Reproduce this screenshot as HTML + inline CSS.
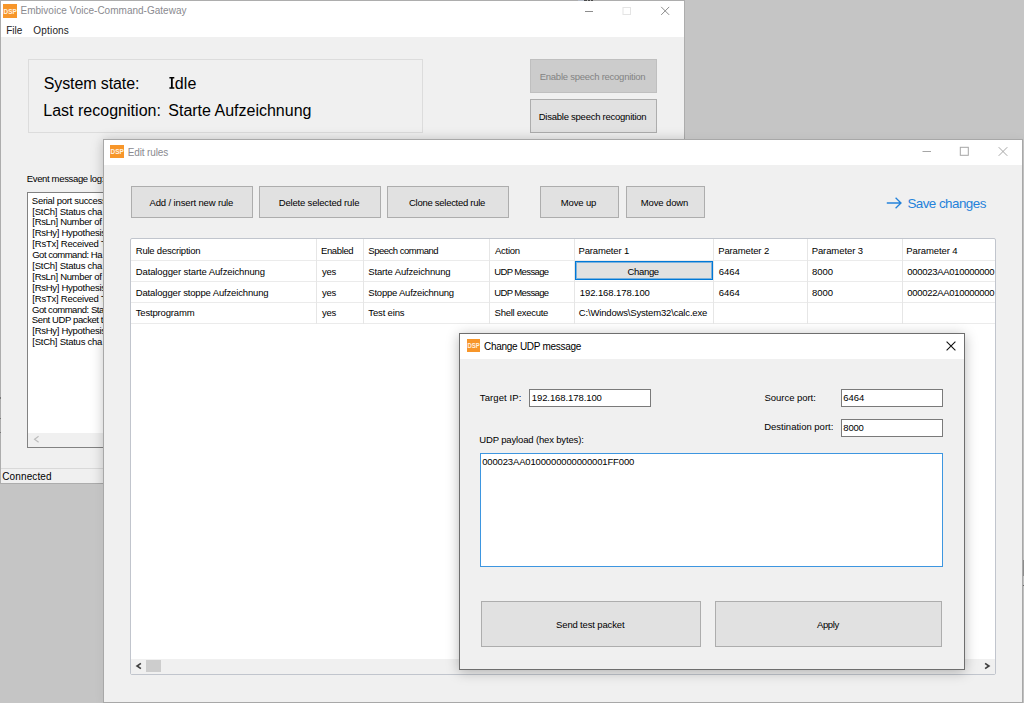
<!DOCTYPE html>
<html><head><meta charset="utf-8"><title>Embivoice Voice-Command-Gateway</title>
<style>
html,body{margin:0;padding:0;}
body{width:1024px;height:703px;overflow:hidden;position:relative;background:#c5c5c5;font-family:"Liberation Sans",sans-serif;}
.b{position:absolute;box-sizing:border-box;}
.t{position:absolute;white-space:nowrap;font-family:"Liberation Sans",sans-serif;}
</style></head><body>
<div class="b" style="left:0px;top:0px;width:685px;height:484px;background:#f0f0f0;border:1px solid #adadad;"></div>
<div class="b" style="left:1px;top:1px;width:683px;height:36px;background:#fff;"></div>
<svg class="b" style="left:3px;top:4px" width="14" height="14" viewBox="0 0 14 14" preserveAspectRatio="none"><rect width="14" height="14" fill="#f7962a"/><text x="7.2" y="9.7" font-family="Liberation Sans" font-weight="bold" font-size="7.4" text-anchor="middle" fill="#fff1e0" textLength="13.2" lengthAdjust="spacingAndGlyphs">DSP</text></svg>
<div class="t" style="left:20.50px;top:4px;font-size:10px;line-height:13px;color:#8a8a8f;letter-spacing:0.012px;">Embivoice Voice-Command-Gateway</div>
<div class="t" style="left:6.20px;top:24px;font-size:10px;line-height:13px;color:#222;letter-spacing:0.033px;">File</div>
<div class="t" style="left:33.35px;top:24px;font-size:10px;line-height:13px;color:#222;letter-spacing:0.175px;">Options</div>
<svg class="b" style="left:580px;top:3px" width="100" height="16" viewBox="0 0 100 16"><path d="M5 8.5h8" stroke="#8c8c8c" stroke-width="1" fill="none"/><rect x="43" y="4.5" width="7.5" height="7" stroke="#e4e4e4" stroke-width="1" fill="none"/><path d="M81.2 3.9l8 8M89.2 3.9l-8 8" stroke="#8c8c8c" stroke-width="1" fill="none"/></svg>
<div class="b" style="left:578px;top:0px;width:6px;height:1px;background:#b6bdc9;"></div>
<div class="b" style="left:584px;top:0px;width:3px;height:1px;background:#4a4a4a;"></div>
<div class="b" style="left:588px;top:0px;width:2px;height:1px;background:#4a4a4a;"></div>
<div class="b" style="left:591px;top:0px;width:2px;height:1px;background:#4a4a4a;"></div>
<div class="b" style="left:0px;top:397px;width:1px;height:2px;background:#777;"></div>
<div class="b" style="left:0px;top:418px;width:1px;height:1px;background:#777;"></div>
<div class="b" style="left:0px;top:432px;width:1px;height:1px;background:#777;"></div>
<div class="b" style="left:28px;top:59px;width:395px;height:74px;border:1px solid #dcdcdc;"></div>
<div class="t" style="left:43.78px;top:74px;font-size:16px;line-height:20px;color:#000;letter-spacing:-0.108px;">System state:</div>
<svg class="b" style="left:169px;top:76px" width="6" height="14" viewBox="0 0 6 14"><path d="M0.4 1.1h4.9v1.5h-1.55v8.7h1.55v1.5h-4.9v-1.5h1.55v-8.7h-1.55z" fill="#000"/></svg>
<div class="t" style="left:174.86px;top:74px;font-size:16px;line-height:20px;color:#000;letter-spacing:0.06px;">dle</div>
<div class="t" style="left:43.22px;top:101px;font-size:16px;line-height:20px;color:#000;letter-spacing:0.018px;">Last recognition:</div>
<div class="t" style="left:168.28px;top:101px;font-size:16px;line-height:20px;color:#000;letter-spacing:-0.001px;">Starte Aufzeichnung</div>
<div class="b" style="left:530px;top:59px;width:127px;height:34px;background:#cccccc;border:1px solid #bfbfbf;"></div>
<div class="t" style="left:539.74px;top:71px;font-size:9.5px;line-height:12px;color:#838383;letter-spacing:-0.255px;">Enable speech recognition</div>
<div class="b" style="left:530px;top:99px;width:127px;height:34px;background:#e1e1e1;border:1px solid #adadad;"></div>
<div class="t" style="left:538.74px;top:111px;font-size:9.5px;line-height:12px;color:#000;letter-spacing:-0.249px;">Disable speech recognition</div>
<div class="t" style="left:26.74px;top:173px;font-size:9.5px;line-height:12px;color:#000;letter-spacing:-0.342px;">Event message log:</div>
<div class="b" style="left:27px;top:192px;width:500px;height:256px;background:#fff;border:1px solid #828282;"></div>
<div class="b" style="left:28px;top:433px;width:498px;height:14px;background:#f0f0f0;"></div>
<svg class="b" style="left:33px;top:435px" width="8" height="9" viewBox="0 0 8 9"><path d="M5.6 1.2L1.6 4.2L5.6 7.2" stroke="#bdbdbd" stroke-width="1.2" fill="none"/></svg>
<div class="t" style="left:31.87px;top:195px;font-size:9.5px;line-height:12px;color:#000;letter-spacing:-0.298px;">Serial port successfully opened</div>
<div class="t" style="left:32.34px;top:206px;font-size:9.5px;line-height:12px;color:#000;letter-spacing:-0.243px;">[StCh] Status cha</div>
<div class="t" style="left:32.34px;top:216px;font-size:9.5px;line-height:12px;color:#000;letter-spacing:-0.328px;">[RsLn] Number of</div>
<div class="t" style="left:32.34px;top:227px;font-size:9.5px;line-height:12px;color:#000;letter-spacing:-0.28px;">[RsHy] Hypothesis: Halte Aufzeichnung</div>
<div class="t" style="left:32.34px;top:238px;font-size:9.5px;line-height:12px;color:#000;letter-spacing:-0.225px;">[RsTx] Received Text: Halte Aufzeichnung</div>
<div class="t" style="left:32.23px;top:249px;font-size:9.5px;line-height:12px;color:#000;letter-spacing:-0.49px;">Got command: Ha</div>
<div class="t" style="left:32.34px;top:260px;font-size:9.5px;line-height:12px;color:#000;letter-spacing:-0.243px;">[StCh] Status cha</div>
<div class="t" style="left:32.34px;top:271px;font-size:9.5px;line-height:12px;color:#000;letter-spacing:-0.328px;">[RsLn] Number of</div>
<div class="t" style="left:32.34px;top:282px;font-size:9.5px;line-height:12px;color:#000;letter-spacing:-0.28px;">[RsHy] Hypothesis: Starte Aufzeichnung</div>
<div class="t" style="left:32.34px;top:293px;font-size:9.5px;line-height:12px;color:#000;letter-spacing:-0.225px;">[RsTx] Received Text: Starte Aufzeichnung</div>
<div class="t" style="left:32.02px;top:304px;font-size:9.5px;line-height:12px;color:#000;letter-spacing:-0.467px;">Got command: Starte Aufzeichnung</div>
<div class="t" style="left:31.87px;top:314px;font-size:9.5px;line-height:12px;color:#000;letter-spacing:-0.396px;">Sent UDP packet to 192.168.178.100</div>
<div class="t" style="left:32.34px;top:325px;font-size:9.5px;line-height:12px;color:#000;letter-spacing:-0.28px;">[RsHy] Hypothesis: Starte Aufzeichnung</div>
<div class="t" style="left:32.34px;top:336px;font-size:9.5px;line-height:12px;color:#000;letter-spacing:-0.243px;">[StCh] Status cha</div>
<div class="b" style="left:1px;top:468px;width:683px;height:1px;background:#d9d9d9;"></div>
<div class="t" style="left:2.25px;top:470px;font-size:10px;line-height:13px;color:#000;letter-spacing:0.125px;">Connected</div>
<div class="b" style="left:0px;top:0px;width:685px;height:484px;overflow:hidden;"><div class="b" style="left:103px;top:139px;width:920px;height:564px;box-shadow:0 1px 12px rgba(0,0,0,.18);"></div></div>
<div class="b" style="left:103px;top:139px;width:920px;height:564px;background:#f0f0f0;border:1px solid #a8a8a8;box-shadow:0 1px 10px rgba(0,0,0,.06);"></div>
<div class="b" style="left:104px;top:140px;width:918px;height:25px;background:#fff;"></div>
<svg class="b" style="left:110px;top:145px" width="14" height="13" viewBox="0 0 14 14" preserveAspectRatio="none"><rect width="14" height="14" fill="#f7962a"/><text x="7.2" y="9.7" font-family="Liberation Sans" font-weight="bold" font-size="7.4" text-anchor="middle" fill="#fff1e0" textLength="13.2" lengthAdjust="spacingAndGlyphs">DSP</text></svg>
<div class="t" style="left:127.70px;top:146px;font-size:10px;line-height:13px;color:#8a8a8f;letter-spacing:-0.117px;">Edit rules</div>
<svg class="b" style="left:918px;top:143px" width="100" height="16" viewBox="0 0 100 16"><path d="M4.5 8.5h8.5" stroke="#a6a6a6" stroke-width="1" fill="none"/><rect x="42.3" y="4.3" width="8" height="8" stroke="#a6a6a6" stroke-width="1" fill="none"/><path d="M80.7 4.2l8.6 8.6M89.3 4.2l-8.6 8.6" stroke="#a6a6a6" stroke-width="1" fill="none"/></svg>
<div class="b" style="left:131px;top:186px;width:122px;height:32px;background:#e1e1e1;border:1px solid #adadad;"></div>
<div class="t" style="left:149.50px;top:197px;font-size:9.5px;line-height:12px;color:#000;letter-spacing:-0.136px;">Add / insert new rule</div>
<div class="b" style="left:259px;top:186px;width:122px;height:32px;background:#e1e1e1;border:1px solid #adadad;"></div>
<div class="t" style="left:278.74px;top:197px;font-size:9.5px;line-height:12px;color:#000;letter-spacing:-0.173px;">Delete selected rule</div>
<div class="b" style="left:387px;top:186px;width:122px;height:32px;background:#e1e1e1;border:1px solid #adadad;"></div>
<div class="t" style="left:409.02px;top:197px;font-size:9.5px;line-height:12px;color:#000;letter-spacing:-0.276px;">Clone selected rule</div>
<div class="b" style="left:540px;top:186px;width:79px;height:32px;background:#e1e1e1;border:1px solid #adadad;"></div>
<div class="t" style="left:560.74px;top:197px;font-size:9.5px;line-height:12px;color:#000;letter-spacing:-0.132px;">Move up</div>
<div class="b" style="left:626px;top:186px;width:79px;height:32px;background:#e1e1e1;border:1px solid #adadad;"></div>
<div class="t" style="left:640.74px;top:197px;font-size:9.5px;line-height:12px;color:#000;letter-spacing:-0.127px;">Move down</div>
<svg class="b" style="left:886px;top:196px" width="17" height="14" viewBox="0 0 17 14"><path d="M0.8 7h14M9.6 1.8L15 7L9.6 12.2" stroke="#2482da" stroke-width="1.3" fill="none"/></svg>
<div class="t" style="left:907.40px;top:196px;font-size:13.4px;line-height:16px;color:#2482da;letter-spacing:-0.535px;">Save changes</div>
<div class="b" style="left:130px;top:238px;width:866px;height:437px;background:#fff;border:1px solid #c1c5cd;border-radius:2px;"></div>
<div class="b" style="left:131px;top:260px;width:864px;height:1px;background:#ebebeb;"></div>
<div class="b" style="left:131px;top:281px;width:864px;height:1px;background:#ebebeb;"></div>
<div class="b" style="left:131px;top:302px;width:864px;height:1px;background:#ebebeb;"></div>
<div class="b" style="left:131px;top:323px;width:864px;height:1px;background:#ebebeb;"></div>
<div class="b" style="left:316px;top:239px;width:1px;height:85px;background:#e6e6e6;"></div>
<div class="b" style="left:363px;top:239px;width:1px;height:85px;background:#e6e6e6;"></div>
<div class="b" style="left:489px;top:239px;width:1px;height:85px;background:#e6e6e6;"></div>
<div class="b" style="left:574px;top:239px;width:1px;height:85px;background:#e6e6e6;"></div>
<div class="b" style="left:713px;top:239px;width:1px;height:85px;background:#e6e6e6;"></div>
<div class="b" style="left:807px;top:239px;width:1px;height:85px;background:#e6e6e6;"></div>
<div class="b" style="left:902px;top:239px;width:1px;height:85px;background:#e6e6e6;"></div>
<div class="t" style="left:135.74px;top:245px;font-size:9.5px;line-height:12px;color:#000;letter-spacing:-0.219px;">Rule description</div>
<div class="t" style="left:320.99px;top:245px;font-size:9.5px;line-height:12px;color:#000;letter-spacing:-0.381px;">Enabled</div>
<div class="t" style="left:368.32px;top:245px;font-size:9.5px;line-height:12px;color:#000;letter-spacing:-0.486px;">Speech command</div>
<div class="t" style="left:495.00px;top:245px;font-size:9.5px;line-height:12px;color:#000;letter-spacing:-0.268px;">Action</div>
<div class="t" style="left:578.49px;top:245px;font-size:9.5px;line-height:12px;color:#000;letter-spacing:-0.156px;">Parameter 1</div>
<div class="t" style="left:718.24px;top:245px;font-size:9.5px;line-height:12px;color:#000;letter-spacing:-0.131px;">Parameter 2</div>
<div class="t" style="left:811.64px;top:245px;font-size:9.5px;line-height:12px;color:#000;letter-spacing:-0.081px;">Parameter 3</div>
<div class="t" style="left:906.24px;top:245px;font-size:9.5px;line-height:12px;color:#000;letter-spacing:-0.095px;">Parameter 4</div>
<div class="t" style="left:135.74px;top:266px;font-size:9.5px;line-height:12px;color:#000;letter-spacing:-0.112px;">Datalogger starte Aufzeichnung</div>
<div class="t" style="left:322.00px;top:266px;font-size:9.5px;line-height:12px;color:#000;letter-spacing:-0.22px;">yes</div>
<div class="t" style="left:368.32px;top:266px;font-size:9.5px;line-height:12px;color:#000;letter-spacing:-0.154px;">Starte Aufzeichnung</div>
<div class="t" style="left:494.29px;top:266px;font-size:9.5px;line-height:12px;color:#000;letter-spacing:-0.624px;">UDP Message</div>
<div class="t" style="left:718.77px;top:266px;font-size:9.5px;line-height:12px;color:#000;letter-spacing:-0.058px;">6464</div>
<div class="t" style="left:812.02px;top:266px;font-size:9.5px;line-height:12px;color:#000;letter-spacing:-0.042px;">8000</div>
<div class="t" style="left:135.74px;top:287px;font-size:9.5px;line-height:12px;color:#000;letter-spacing:-0.155px;">Datalogger stoppe Aufzeichnung</div>
<div class="t" style="left:322.00px;top:287px;font-size:9.5px;line-height:12px;color:#000;letter-spacing:-0.22px;">yes</div>
<div class="t" style="left:368.32px;top:287px;font-size:9.5px;line-height:12px;color:#000;letter-spacing:-0.224px;">Stoppe Aufzeichnung</div>
<div class="t" style="left:494.29px;top:287px;font-size:9.5px;line-height:12px;color:#000;letter-spacing:-0.624px;">UDP Message</div>
<div class="t" style="left:579.79px;top:287px;font-size:9.5px;line-height:12px;color:#000;letter-spacing:-0.089px;">192.168.178.100</div>
<div class="t" style="left:718.77px;top:287px;font-size:9.5px;line-height:12px;color:#000;letter-spacing:-0.058px;">6464</div>
<div class="t" style="left:812.02px;top:287px;font-size:9.5px;line-height:12px;color:#000;letter-spacing:-0.042px;">8000</div>
<div class="t" style="left:135.81px;top:307px;font-size:9.5px;line-height:12px;color:#000;letter-spacing:-0.177px;">Testprogramm</div>
<div class="t" style="left:322.00px;top:307px;font-size:9.5px;line-height:12px;color:#000;letter-spacing:-0.22px;">yes</div>
<div class="t" style="left:368.31px;top:307px;font-size:9.5px;line-height:12px;color:#000;letter-spacing:-0.151px;">Test eins</div>
<div class="t" style="left:494.57px;top:307px;font-size:9.5px;line-height:12px;color:#000;letter-spacing:-0.27px;">Shell execute</div>
<div class="t" style="left:578.77px;top:307px;font-size:9.5px;line-height:12px;color:#000;letter-spacing:-0.165px;">C:\Windows\System32\calc.exe</div>
<div class="t" style="left:907.17px;top:266px;font-size:9.5px;line-height:12px;color:#000;width:87.83000000000004px;letter-spacing:-0.284px;overflow:hidden;">000023AA010000000</div>
<div class="t" style="left:907.17px;top:287px;font-size:9.5px;line-height:12px;color:#000;width:87.83000000000004px;letter-spacing:-0.284px;overflow:hidden;">000022AA010000000</div>
<div class="b" style="left:575px;top:261px;width:138px;height:19px;background:#e1e1e1;border:1px solid #0078d7;box-shadow:inset 0 0 0 1px rgba(0,120,215,.45);"></div>
<div class="t" style="left:627.52px;top:266px;font-size:9.5px;line-height:12px;color:#000;letter-spacing:-0.329px;">Change</div>
<div class="b" style="left:131px;top:659px;width:864px;height:15px;background:#f0f0f0;"></div>
<div class="b" style="left:146px;top:660px;width:15px;height:12px;background:#cdcdcd;"></div>
<svg class="b" style="left:134px;top:661px" width="10" height="10" viewBox="0 0 10 10"><path d="M6.9 2.4L3.1 5L6.9 7.6" stroke="#404040" stroke-width="1.7" fill="none"/></svg>
<svg class="b" style="left:982px;top:661px" width="10" height="10" viewBox="0 0 10 10"><path d="M3.1 2.4L6.9 5L3.1 7.6" stroke="#404040" stroke-width="1.7" fill="none"/></svg>
<div class="b" style="left:1023px;top:560px;width:1px;height:16px;background:#8c8c8c;"></div>
<div class="b" style="left:1023px;top:585px;width:1px;height:1px;background:#666;"></div>
<div class="b" style="left:459px;top:333px;width:506px;height:337px;background:#f0f0f0;border:1px solid #6e6e6e;box-shadow:0 2px 12px rgba(0,0,0,.28);"></div>
<div class="b" style="left:460px;top:334px;width:504px;height:25px;background:#fff;"></div>
<svg class="b" style="left:467px;top:339px" width="13" height="13" viewBox="0 0 14 14" preserveAspectRatio="none"><rect width="14" height="14" fill="#f7962a"/><text x="7.2" y="9.7" font-family="Liberation Sans" font-weight="bold" font-size="7.4" text-anchor="middle" fill="#fff1e0" textLength="13.2" lengthAdjust="spacingAndGlyphs">DSP</text></svg>
<div class="t" style="left:484.00px;top:340px;font-size:10px;line-height:13px;color:#000;letter-spacing:-0.276px;">Change UDP message</div>
<svg class="b" style="left:944px;top:339px" width="14" height="14" viewBox="0 0 14 14"><path d="M2.6 2.6l8.8 8.8M11.4 2.6l-8.8 8.8" stroke="#111" stroke-width="1.1" fill="none"/></svg>
<div class="t" style="left:479.81px;top:392px;font-size:9.5px;line-height:12px;color:#000;letter-spacing:0.098px;">Target IP:</div>
<div class="b" style="left:529px;top:389px;width:122px;height:18px;background:#fff;border:1px solid #7a7a7a;"></div>
<div class="t" style="left:531.79px;top:392px;font-size:9.5px;line-height:12px;color:#000;letter-spacing:-0.089px;">192.168.178.100</div>
<div class="t" style="left:764.57px;top:392px;font-size:9.5px;line-height:12px;color:#000;letter-spacing:-0.045px;">Source port:</div>
<div class="b" style="left:841px;top:389px;width:102px;height:18px;background:#fff;border:1px solid #7a7a7a;"></div>
<div class="t" style="left:843.27px;top:392px;font-size:9.5px;line-height:12px;color:#000;letter-spacing:-0.058px;">6464</div>
<div class="t" style="left:764.24px;top:421px;font-size:9.5px;line-height:12px;color:#000;letter-spacing:-0.006px;">Destination port:</div>
<div class="b" style="left:841px;top:419px;width:102px;height:18px;background:#fff;border:1px solid #7a7a7a;"></div>
<div class="t" style="left:843.37px;top:422px;font-size:9.5px;line-height:12px;color:#000;letter-spacing:-0.225px;">8000</div>
<div class="t" style="left:479.29px;top:434px;font-size:9.5px;line-height:12px;color:#000;letter-spacing:-0.154px;">UDP payload (hex bytes):</div>
<div class="b" style="left:480px;top:453px;width:463px;height:114px;background:#fff;border:1px solid #3d96e0;"></div>
<div class="t" style="left:482.17px;top:456px;font-size:9.5px;line-height:12px;color:#000;letter-spacing:-0.15px;">000023AA0100000000000001FF000</div>
<div class="b" style="left:481px;top:601px;width:220px;height:46px;background:#e1e1e1;border:1px solid #adadad;"></div>
<div class="t" style="left:556.07px;top:619px;font-size:9.5px;line-height:12px;color:#000;letter-spacing:-0.153px;">Send test packet</div>
<div class="b" style="left:715px;top:601px;width:227px;height:46px;background:#e1e1e1;border:1px solid #adadad;"></div>
<div class="t" style="left:817.00px;top:619px;font-size:9.5px;line-height:12px;color:#000;letter-spacing:-0.375px;">Apply</div>
</body></html>
